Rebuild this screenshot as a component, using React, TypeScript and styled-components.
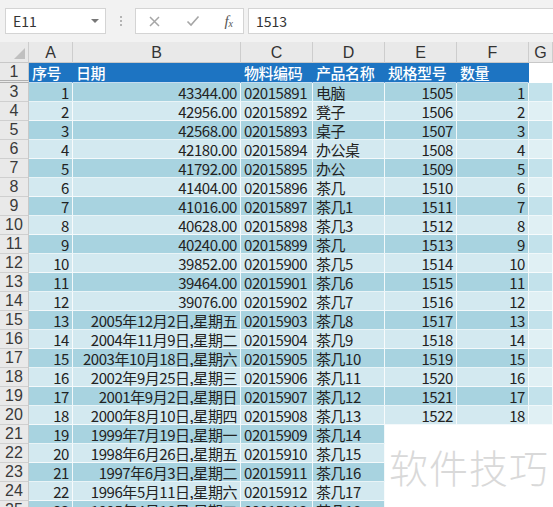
import React from "react";
import styled, { createGlobalStyle } from "styled-components";

const GlobalStyle = createGlobalStyle`
  html, body {
    margin: 0;
    padding: 0;
    background: #fff;
  }
  body {
    width: 553px;
    height: 507px;
    overflow: hidden;
    font-family: "Noto Sans CJK SC", "Noto Sans", sans-serif;
  }
`;

type Kind = "head" | "odd" | "even" | "pale" | "paleEven" | "blank";

const fills: Record<Kind, string> = {
  head: "#1d74c2",
  odd: "#a8d3e0",
  even: "#d3e9f0",
  pale: "#c3e2eb",
  paleEven: "#e0f0f4",
  blank: "#ffffff",
};

const Page = styled.div`
  position: relative;
  width: 553px;
  height: 507px;
  overflow: hidden;
  background: #fff;
`;

const Toolbar = styled.div`
  display: flex;
  align-items: center;
  height: 42px;
  padding: 0 0 0 5px;
  background: #f2f2f2;
  box-sizing: border-box;
`;

const NameBox = styled.div`
  display: flex;
  align-items: center;
  justify-content: space-between;
  width: 101px;
  height: 26px;
  box-sizing: border-box;
  padding: 0 6px 0 7px;
  background: #fff;
  border: 1px solid #d4d4d4;
  font-size: 14px;
  color: #333;
`;

const Caret = styled.span`
  width: 0;
  height: 0;
  border-left: 4px solid transparent;
  border-right: 4px solid transparent;
  border-top: 4px solid #777;
`;

const Grip = styled.div`
  display: flex;
  flex-direction: column;
  gap: 2px;
  margin: 0 13px 0 14px;
  span {
    width: 2px;
    height: 2px;
    background: #b4b4b4;
  }
`;

const FxBox = styled.div`
  display: flex;
  align-items: center;
  justify-content: space-between;
  width: 109px;
  height: 26px;
  box-sizing: border-box;
  padding: 0 10px 0 12px;
  background: #fff;
  border: 1px solid #d4d4d4;
`;

const FxLabel = styled.span`
  font-family: "Liberation Serif", serif;
  font-style: italic;
  font-size: 15px;
  color: #555;
  sub {
    font-size: 10px;
    vertical-align: -1px;
  }
`;

const FormulaInput = styled.div`
  flex: 1;
  height: 26px;
  margin-left: 4px;
  box-sizing: border-box;
  padding: 0 7px;
  display: flex;
  align-items: center;
  background: #fff;
  border: 1px solid #d4d4d4;
  border-right: none;
  font-size: 14px;
  color: #333;
`;

const Sheet = styled.div`
  display: grid;
  grid-template-columns: 29px 44px 168px 72px 72px 72px 72px 1fr;
  grid-template-rows: 21px 20px;
  grid-auto-rows: 19px;
  font-size: 15px;
  line-height: 19px;
  letter-spacing: -0.45px;
`;

const ColHead = styled.div<{ $corner?: boolean }>`
  box-sizing: border-box;
  background: #e9e9e9;
  border-right: 1px solid #cdcdcd;
  border-bottom: 1px solid #c8c8c8;
  color: #333;
  font-family: "Liberation Sans", sans-serif;
  font-size: 16px;
  letter-spacing: 0;
  line-height: 21px;
  text-align: center;
  position: relative;
  overflow: hidden;
  ${(p) =>
    p.$corner &&
    `&::after {
      content: "";
      position: absolute;
      right: 3px;
      bottom: 3px;
      border-left: 11px solid transparent;
      border-bottom: 11px solid #c0c0c0;
    }`}
`;

const RowHead = styled.div<{ $hidden?: boolean }>`
  box-sizing: border-box;
  background: #e9e9e9;
  border-right: 1px solid #c8c8c8;
  border-bottom: ${(p) => (p.$hidden ? "3px double #b0b0b0" : "1px solid #cfcfcf")};
  color: #3a3a3a;
  font-family: "Liberation Sans", sans-serif;
  font-size: 16px;
  letter-spacing: 0;
  line-height: 18px;
  text-align: center;
`;

const Cell = styled.div<{ $kind: Kind; $right?: boolean }>`
  box-sizing: border-box;
  background: ${(p) => fills[p.$kind]};
  color: ${(p) => (p.$kind === "head" ? "#fff" : "#222")};
  font-weight: ${(p) => (p.$kind === "head" ? 500 : 400)};
  text-align: ${(p) => (p.$right ? "right" : "left")};
  border-right: 1px solid
    ${(p) => (p.$kind === "blank" || p.$kind === "head" ? "transparent" : "rgba(255,255,255,0.85)")};
  border-bottom: 1px solid
    ${(p) => (p.$kind === "blank" ? "transparent" : "rgba(255,255,255,0.75)")};
  padding: 0 3px;
  white-space: nowrap;
  overflow: hidden;
`;

const Watermark = styled.div`
  position: absolute;
  left: 389px;
  top: 442px;
  font-size: 39px;
  font-weight: 300;
  letter-spacing: 1px;
  color: #d9d9d9;
  line-height: 48px;
`;

const names = [
  "电脑", "凳子", "桌子", "办公桌", "办公", "茶几", "茶几1", "茶几3", "茶几", "茶几5", "茶几6", "茶几7",
  "茶几8", "茶几9", "茶几10", "茶几11", "茶几12", "茶几13", "茶几14", "茶几15", "茶几16", "茶几17", "茶几18",
];

const dates = [
  "2005年12月2日,星期五",
  "2004年11月9日,星期二",
  "2003年10月18日,星期六",
  "2002年9月25日,星期三",
  "2001年9月2日,星期日",
  "2000年8月10日,星期四",
  "1999年7月19日,星期一",
  "1998年6月26日,星期五",
  "1997年6月3日,星期二",
  "1996年5月11日,星期六",
  "1995年4月18日,星期二",
];

const rows = names.map((name, i) => ({
  seq: i + 1,
  date: i < 12 ? `${43344 - 388 * i}.00` : dates[i - 12],
  code: String(2015891 + i).padStart(8, "0"),
  name,
}));

const headers = ["序号", "日期", "物料编码", "产品名称", "规格型号", "数量"];

export default function App() {
  return (
    <Page>
      <GlobalStyle />
      <Toolbar>
        <NameBox>
          E11
          <Caret />
        </NameBox>
        <Grip>
          <span />
          <span />
          <span />
        </Grip>
        <FxBox>
          <svg width="13" height="13" viewBox="0 0 13 13">
            <path d="M2 2 L11 11 M11 2 L2 11" stroke="#a6a6a6" strokeWidth="1.5" />
          </svg>
          <svg width="14" height="12" viewBox="0 0 14 12">
            <path d="M1.5 6.5 L5 10 L12.5 1.5" stroke="#a6a6a6" strokeWidth="1.6" fill="none" />
          </svg>
          <FxLabel>
            f<sub>x</sub>
          </FxLabel>
        </FxBox>
        <FormulaInput>1513</FormulaInput>
      </Toolbar>
      <Sheet>
        <ColHead $corner />
        {["A", "B", "C", "D", "E", "F", "G"].map((c) => (
          <ColHead key={c}>{c}</ColHead>
        ))}

        <RowHead $hidden>1</RowHead>
        {headers.map((h) => (
          <Cell key={h} $kind="head">
            {h}
          </Cell>
        ))}
        <Cell $kind="blank" />

        {rows.map((r, i) => {
          const k: Kind = i % 2 === 0 ? "odd" : "even";
          const full = i < 18;
          return (
            <React.Fragment key={r.seq}>
              <RowHead>{i + 3}</RowHead>
              <Cell $kind={k} $right>
                {r.seq}
              </Cell>
              <Cell $kind={k} $right>
                {r.date}
              </Cell>
              <Cell $kind={k}>{r.code}</Cell>
              <Cell $kind={k}>{r.name}</Cell>
              <Cell $kind={full ? k : "blank"} $right>
                {full ? 1505 + i : ""}
              </Cell>
              <Cell $kind={full ? k : "blank"} $right>
                {full ? r.seq : ""}
              </Cell>
              <Cell $kind={full ? (i % 2 === 0 ? "pale" : "paleEven") : "blank"} />
            </React.Fragment>
          );
        })}
      </Sheet>
      <Watermark>软件技巧</Watermark>
    </Page>
  );
}
